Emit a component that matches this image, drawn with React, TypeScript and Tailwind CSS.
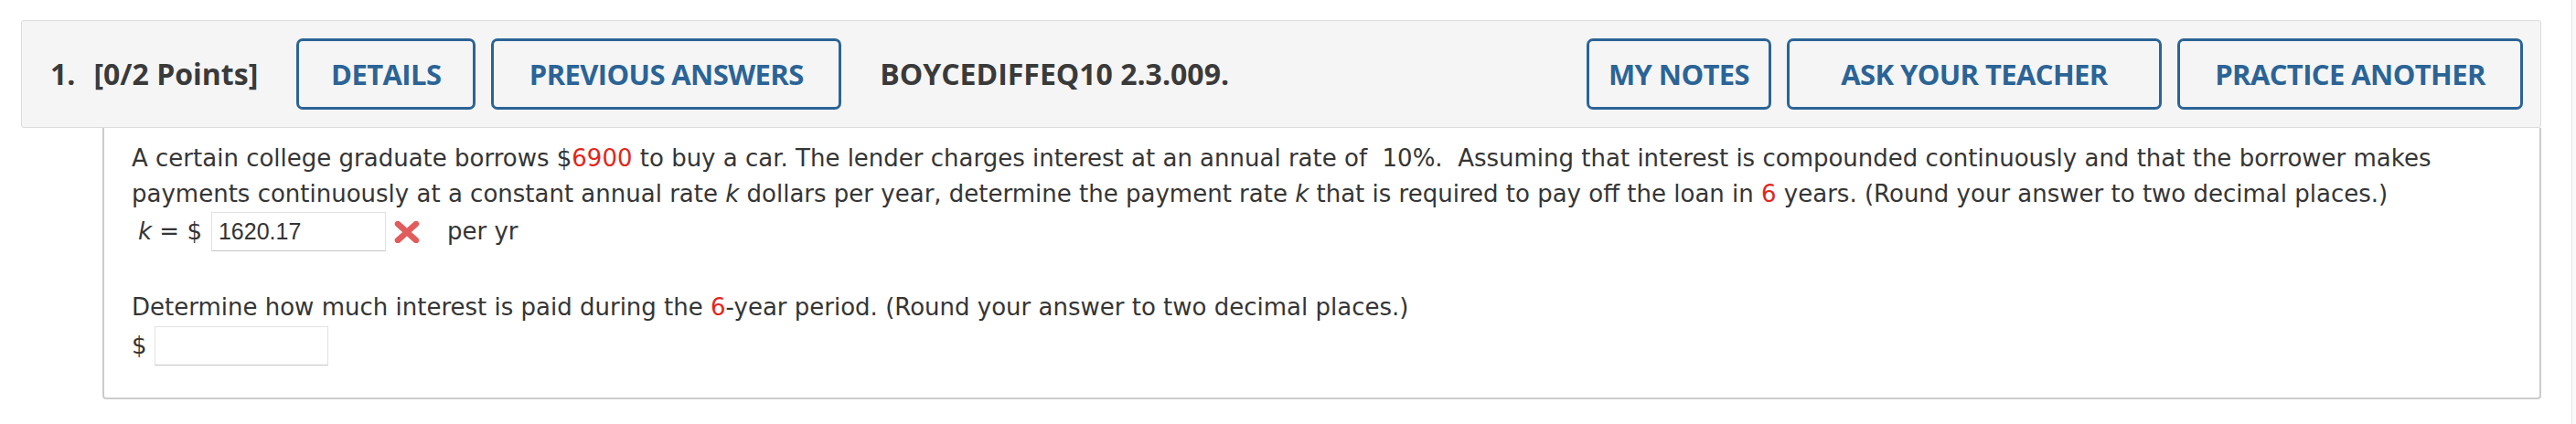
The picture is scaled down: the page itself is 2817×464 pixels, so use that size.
import React from 'react'

const buttons = [
  { label: 'DETAILS', w: 'w-[196px]' },
  { label: 'PREVIOUS ANSWERS', w: 'w-[383px]' },
]

const rightButtons = [
  { label: 'MY NOTES', w: 'w-[202px]' },
  { label: 'ASK YOUR TEACHER', w: 'w-[410px]' },
  { label: 'PRACTICE ANOTHER', w: 'w-[378px]' },
]

const HeadButton: React.FC<{ label: string; w: string }> = ({ label, w }) => (
  <button
    className={`${w} flex h-[78px] shrink-0 items-center justify-center rounded-[7px] border-[3px] border-[#2b6496] text-[31px] font-bold tracking-[-0.6px] text-[#2b6496]`}
  >
    {label}
  </button>
)

const Red: React.FC<{ children: React.ReactNode }> = ({ children }) => (
  <span className="text-[#e3261b]">{children}</span>
)

const WrongMark = () => (
  <svg width="30" height="24" viewBox="0 0 30 24" className="shrink-0">
    <path
      d="M5 3 L25 21 M25 3 L5 21"
      stroke="#e15c5c"
      strokeWidth="6.5"
      strokeLinecap="round"
      fill="none"
    />
  </svg>
)

export default function App() {
  return (
    <div className="flex h-[464px] w-[2817px] bg-white">
      <div className="w-[2812px]">
        {/* question header */}
        <div className="ml-[23px] mt-[22px] flex h-[118px] w-[2756px] items-center rounded-[3px] border border-[#dcdcdc] bg-[#f5f5f5] pl-[31px] pr-[19px] font-['Open_Sans',sans-serif] text-[#3a3a3a]">
          <span className="text-[32px] font-bold">1.</span>
          <span className="ml-[20px] text-[32px] font-bold">[0/2 Points]</span>
          <div className="ml-[42px] flex gap-[17px]">
            {buttons.map((b) => (
              <HeadButton key={b.label} {...b} />
            ))}
          </div>
          <span className="ml-[42px] text-[32px] font-bold">BOYCEDIFFEQ10 2.3.009.</span>
          <div className="ml-auto flex gap-[17px]">
            {rightButtons.map((b) => (
              <HeadButton key={b.label} {...b} />
            ))}
          </div>
        </div>

        {/* question body */}
        <div className="ml-[112px] h-[297px] w-[2667px] rounded-b-[4px] border-x-2 border-b-2 border-[#cccccc] pl-[30px] pt-[14px] font-['DejaVu_Sans',Verdana,sans-serif] text-[26px] leading-[39px] text-[#353535]">
          <p className="whitespace-nowrap">
            A certain college graduate borrows $<Red>6900</Red> to buy a car. The lender charges interest at an
            annual rate of&nbsp; 10%.&nbsp; Assuming that interest is compounded continuously and that the borrower
            makes
          </p>
          <p className="whitespace-nowrap">
            payments continuously at a constant annual rate <i>k</i> dollars per year, determine the payment rate{' '}
            <i>k</i> that is required to pay off the loan in <Red>6</Red> years. (Round your answer to two decimal
            places.)
          </p>
          <div className="flex h-[43px] items-center">
            <span className="ml-[7px]">
              <i>k</i> = $
            </span>
            <div className="ml-[10px] flex h-[43px] w-[191px] items-center border border-[#e2e2e2] border-b-[#c4c4c4] bg-white pl-[7px] font-['Liberation_Sans',Arial,sans-serif] text-[25px] text-[#333]">
              1620.17
            </div>
            <div className="ml-[8px]">
              <WrongMark />
            </div>
            <span className="ml-[29px]">per yr</span>
          </div>

          <p className="mt-[42px] whitespace-nowrap">
            Determine how much interest is paid during the <Red>6</Red>-year period. (Round your answer to two
            decimal places.)
          </p>
          <div className="mt-[1px] flex h-[43px] items-center">
            <span>$</span>
            <div className="ml-[8px] h-[43px] w-[190px] border border-[#e2e2e2] border-b-[#c4c4c4] bg-white" />
          </div>
        </div>
      </div>
      <div className="w-[5px] border-l border-[#e6e6e6] bg-[#fafafa]" />
    </div>
  )
}
